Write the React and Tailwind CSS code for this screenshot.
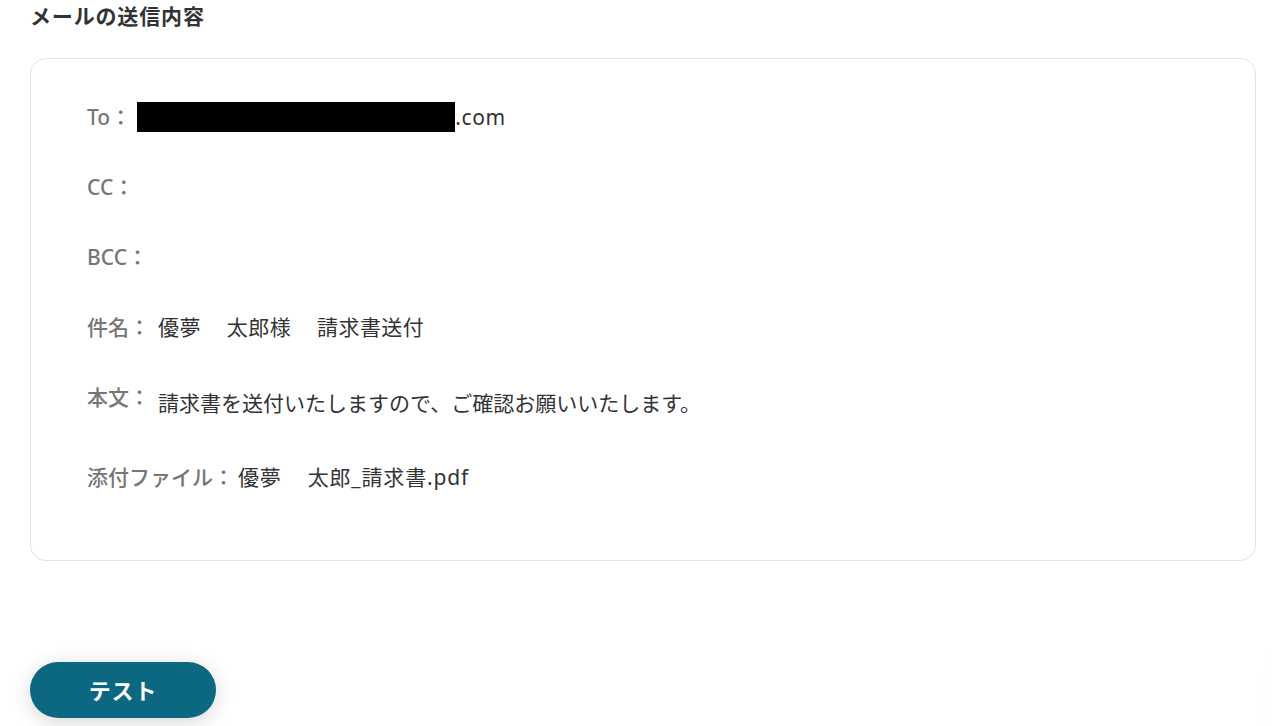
import React from "react";

const Gap = () => <span className="inline-block w-[26px]" />;

const rows = [
  { label: "To：", value: "to" },
  { label: "CC：", value: null },
  { label: "BCC：", value: null },
  {
    label: "件名：",
    value: (
      <span className="tracking-[0.02em]">
        優夢<Gap />太郎様<Gap />請求書送付
      </span>
    ),
  },
  { label: "本文：", value: "請求書を送付いたしますので、ご確認お願いいたします。", body: true },
  {
    label: "添付ファイル：",
    value: (
      <span className="-ml-[4px] tracking-[0.04em]">
        優夢<Gap />太郎_請求書.pdf
      </span>
    ),
  },
];

const App = () => {
  return (
    <div
      className="relative w-[1272px] h-[726px] overflow-hidden bg-white"
      style={{ fontFamily: '"Noto Sans", "Noto Sans CJK JP", sans-serif' }}
    >
      <div className="pl-[30px] pr-[16px]">
        <h2 className="pt-[2px] text-[21px] leading-[28px] font-bold text-[#333333] tracking-[0.04em]">
          メールの送信内容
        </h2>

        {/* mail card */}
        <div className="mt-[28px] h-[503px] rounded-[16px] border border-[#e2e2e2] pl-[56px] pt-[43px]">
          <div className="flex flex-col">
            {rows.map((row, i) => (
              <div
                key={i}
                className={
                  "flex h-[30px] " +
                  (i === 5 ? "mt-[50px] " : i === 0 ? "" : "mt-[40px] ")
                }
              >
                <span className="text-[21px] leading-[30px] font-medium text-[#767676]">
                  {row.label}
                </span>
                {row.value === "to" ? (
                  <span className="ml-[6px] flex items-center">
                    <span className="block h-[30px] w-[318px] bg-black" />
                    <span className="text-[21px] leading-[30px] text-[#333333] tracking-[0.03em]">.com</span>
                  </span>
                ) : row.value ? (
                  <span
                    className={
                      "ml-[8px] text-[21px] leading-[30px] text-[#333333] " +
                      (row.body ? "mt-[6px]" : "")
                    }
                  >
                    {row.value}
                  </span>
                ) : null}
              </div>
            ))}
          </div>
        </div>
      </div>

      <button className="absolute left-[30px] top-[662px] h-[56px] w-[186px] rounded-full bg-[#0b6880] text-[22px] font-bold text-white shadow-[0_4px_20px_rgba(0,0,0,0.16)] tracking-[0.04em]">
        テスト
      </button>

      {/* partially visible floating element, bottom right */}
      <div className="absolute left-[1290px] top-[640px] h-[120px] w-[120px] rounded-full bg-white shadow-[0_0_40px_rgba(0,0,0,0.08)]" />
    </div>
  );
};

export default App;
